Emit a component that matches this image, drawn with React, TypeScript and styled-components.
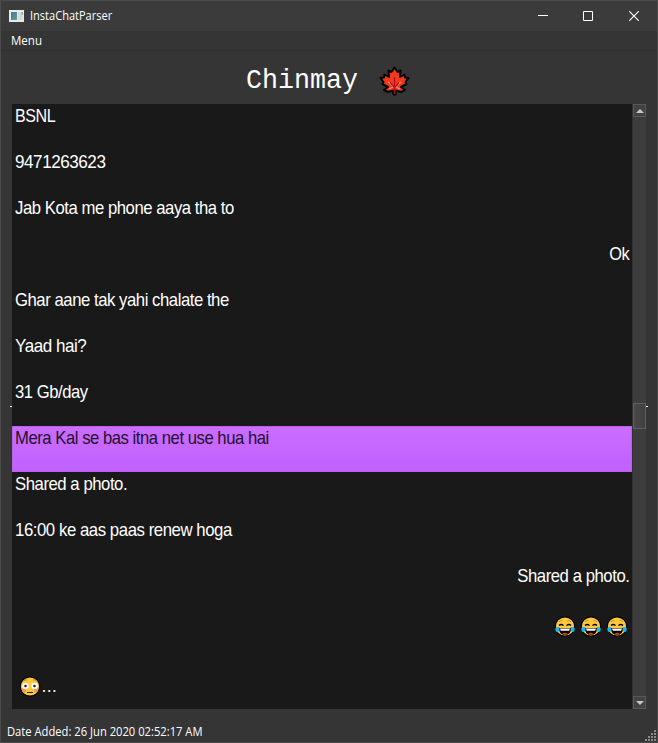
import React from "react";
import styled, { createGlobalStyle } from "styled-components";

const GlobalStyle = createGlobalStyle`
  html, body { margin: 0; padding: 0; background: #353535; }
  body { overflow: hidden; }
  * { box-sizing: border-box; }
`;

const Window = styled.div`
  position: relative;
  width: 658px;
  height: 743px;
  display: flex;
  flex-direction: column;
  background: #353535;
  border: 1px solid #4b4b4b;
  color: #fff;
  font-family: "Open Sans", "Noto Sans", sans-serif;
  font-size: 12px;
  overflow: hidden;
`;

const TitleBar = styled.header`
  display: flex;
  align-items: center;
  height: 30px;
  padding-left: 8px;
  background: #3b3b3b;
`;

const Fitted = styled.span<{ $scale: number; $right?: boolean }>`
  display: inline-block;
  white-space: pre;
  transform: scaleX(${(p) => p.$scale});
  transform-origin: ${(p) => (p.$right ? "right" : "left")} center;
`;

const MessageText = styled(Fitted)`
  letter-spacing: -0.52px;
`;

const WindowTitle = styled.div`
  flex: 1;
  margin-left: 6px;
  line-height: 16px;
`;

const WindowButton = styled.button`
  width: 46px;
  height: 30px;
  padding: 0;
  border: 0;
  background: none;
  display: grid;
  place-items: center;

  &:first-of-type {
    padding-left: 2px;
  }
`;

const MenuBar = styled.nav`
  height: 20px;
  padding-left: 10px;
  line-height: 19px;
  border-bottom: 1px solid #2e2e2e;
`;

const Heading = styled.h1`
  margin: 0;
  height: 53px;
  padding: 6px 0 0 245px;
  display: flex;
  align-items: center;
  gap: 21px;
  font: 400 26.67px/32px "Liberation Mono", monospace;
`;

const HeadingName = styled.span`
  transform: scaleY(1.05);
`;

const Body = styled.main`
  display: flex;
  height: 605px;
  margin: 0 11px;
`;

const List = styled.div`
  flex: 1;
  background: #191919;
  font: 19px/23px "Liberation Sans", sans-serif;
`;

const Row = styled.div<{ $mine?: boolean; $selected?: boolean; $tall?: boolean }>`
  display: flex;
  height: ${(p) => (p.$tall ? 60 : 46)}px;
  padding: ${(p) => (p.$tall ? "6px" : "0")} 3px 0;
  justify-content: ${(p) => (p.$mine ? "flex-end" : "flex-start")};
  ${(p) =>
    p.$selected &&
    `background: linear-gradient(#cb6dff, #c060ff);
     box-shadow: inset 0 0 0 1px #b961ed;
     color: #24112e;`}
`;

const EmojiGroup = styled.div`
  display: flex;
  gap: 4px;
  padding-right: 1px;
  height: 22px;
`;

const FaceGroup = styled.div`
  display: flex;
  padding-left: 4px;
  height: 22px;
`;

const Dots = styled.span`
  line-height: 19px;
`;

const ScrollTrack = styled.div`
  width: 14px;
  display: flex;
  flex-direction: column;
  background: #3d3d3d;
  border-left: 1px solid #303030;
`;

const ScrollButton = styled.button`
  height: 13px;
  width: 13px;
  padding: 0;
  border: 1px solid #5a5a5a;
  background: #424242;
  display: grid;
  place-items: center;
`;

const TrackSpace = styled.div<{ $height: number }>`
  height: ${(p) => p.$height}px;
`;

const Thumb = styled.div`
  height: 26px;
  border: 1px solid #606060;
  background: linear-gradient(90deg, #484848, #404040);
`;

const StatusBar = styled.footer`
  flex: 1;
  display: flex;
  padding: 15px 0 0 6px;
  line-height: 16px;
`;

const Tick = styled.i<{ $left: number }>`
  position: absolute;
  top: 405px;
  left: ${(p) => p.$left}px;
  width: 2px;
  height: 1px;
  background: #fff;
`;

const Grip = styled.svg`
  position: absolute;
  right: 1px;
  bottom: 1px;
`;

const AppIcon = () => (
  <svg width="15" height="12" viewBox="0 0 15 12">
    <defs>
      <linearGradient id="pane" x1="0" y1="0" x2="1" y2="1">
        <stop offset="0" stopColor="#4675a8" />
        <stop offset="1" stopColor="#57a878" />
      </linearGradient>
    </defs>
    <path fill="#e8eaec" d="M0 0h15v12H0z" />
    <path fill="url(#pane)" d="M2 2h6v8H2z" />
    <path fill="#d5d8da" d="M9 2h3v8H9z" />
    <path fill="#7fa49c" d="M12.500 2H14v3h-1.500z" />
    <path fill="#d7dcd9" d="M12 5h2v5h-2z" />
  </svg>
);

const MapleLeaf = () => (
  <svg width="31" height="30" viewBox="0 0 31 30">
    <path
      fill="#f4391a"
      stroke="#000"
      strokeWidth="2"
      strokeLinejoin="round"
      d="M15.500 1.500 18.500 6 21.500 4.500 21 11 25.500 8.500 26 11.500 29.500 12 26.500 16 27.500 18 22 21 26 24 22 26 17 24.500 16.500 28.500H14.500L14 24.500 9 26 5 24 9 21 3.500 18 4.500 16 1.500 12 5 11.500 5.500 8.500 10 11 9.500 4.500 12.500 6z"
    />
    <path fill="none" stroke="#ff9163" strokeWidth="1.200" d="M9 16l5 4M22 16l-5 4M10 23l4-2M21 23l-4-2" />
    <path fill="none" stroke="#b50f28" strokeWidth="1.300" d="M15.500 11v17M11 16.500l4.500 5 4.500-5" />
  </svg>
);

const Joy = () => (
  <svg width="22" height="22" viewBox="0 0 22 22">
    <circle cx="11" cy="10.500" r="9.700" fill="#ffc83d" stroke="#000" strokeWidth="1.200" />
    <path fill="none" stroke="#d38b12" strokeWidth="1" d="M5 6Q6 4.300 8.500 4.500M17 6Q16 4.300 13.500 4.500" />
    <path fill="none" stroke="#000" strokeWidth="1.300" d="M5 9.500Q7 7.500 9.500 9.500M12.500 9.500Q15 7.500 17 9.500" />
    <path fill="#000" d="M5 12h12q0 7-6 7t-6-7z" />
    <path fill="#fff" d="M6 12.500h10l-.8 2.200H6.800z" />
    <path fill="#f03a17" d="M8.500 18q2.500-2.500 5 0-2.500 1.600-5 0z" />
    <path fill="#18b5ee" d="M1.300 12q1.500-1.300 4-.7.200 4.500-2 4.900-2.200-.2-2-4.200zM20.700 12q-1.500-1.300-4-.7-.200 4.500 2 4.900 2.200-.2 2-4.200z" />
  </svg>
);

const Flushed = () => (
  <svg width="22" height="22" viewBox="0 0 22 22">
    <circle cx="11" cy="10.500" r="9.700" fill="#ffc83d" stroke="#000" strokeWidth="1.200" />
    <path fill="none" stroke="#d38b12" strokeWidth="1" d="M4.500 5Q6 3.300 8.500 4M17.500 5Q16 3.300 13.500 4" />
    <circle cx="5" cy="14" r="2.200" fill="#ff9152" />
    <circle cx="17" cy="14" r="2.200" fill="#ff9152" />
    <circle cx="6.500" cy="10" r="3.200" fill="#fff" />
    <circle cx="15.500" cy="10" r="3.200" fill="#fff" />
    <circle cx="6.500" cy="10" r="1.300" fill="#222" />
    <circle cx="15.500" cy="10" r="1.300" fill="#222" />
    <path stroke="#222" strokeWidth="1" d="M8 16.500h6" />
  </svg>
);

type Message = { text: string; scale: number; mine?: boolean; selected?: boolean };

const messages: Message[] = [
  { text: "BSNL", scale: 0.845 },
  { text: "9471263623", scale: 0.9 },
  { text: "Jab Kota me phone aaya tha to", scale: 0.879 },
  { text: "Ok", scale: 0.86, mine: true },
  { text: "Ghar aane tak yahi chalate the", scale: 0.879 },
  { text: "Yaad hai?", scale: 0.896 },
  { text: "31 Gb/day", scale: 0.876 },
  { text: "Mera Kal se bas itna net use hua hai", scale: 0.876, selected: true },
  { text: "Shared a photo.", scale: 0.88 },
  { text: "16:00 ke aas paas renew hoga", scale: 0.884 },
  { text: "Shared a photo.", scale: 0.88, mine: true },
];

const gripDots = [[9, 0], [6, 3], [9, 3], [3, 6], [6, 6], [9, 6], [0, 9], [3, 9], [6, 9], [9, 9]];

export default function App() {
  return (
    <>
      <GlobalStyle />
      <Window>
        <TitleBar>
          <AppIcon />
          <WindowTitle>
            <Fitted $scale={0.92}>InstaChatParser</Fitted>
          </WindowTitle>
          <WindowButton aria-label="Minimize">
            <svg width="10" height="10"><path d="M0 4.500h10" stroke="#fff" /></svg>
          </WindowButton>
          <WindowButton aria-label="Maximize">
            <svg width="10" height="10"><path d="M.5.5h9v9h-9z" fill="none" stroke="#fff" /></svg>
          </WindowButton>
          <WindowButton aria-label="Close">
            <svg width="10" height="10"><path d="M.3.3l9.400 9.400M9.700.3L.3 9.700" stroke="#fff" strokeWidth="1.200" /></svg>
          </WindowButton>
        </TitleBar>
        <MenuBar>
          <Fitted $scale={0.96}>Menu</Fitted>
        </MenuBar>
        <Heading>
          <HeadingName>Chinmay</HeadingName>
          <MapleLeaf />
        </Heading>
        <Body>
          <List>
            {messages.map((m, i) => (
              <Row key={i} $mine={m.mine} $selected={m.selected}>
                <MessageText $scale={m.scale} $right={m.mine}>{m.text}</MessageText>
              </Row>
            ))}
            <Row $mine $tall>
              <EmojiGroup><Joy /><Joy /><Joy /></EmojiGroup>
            </Row>
            <Row $tall>
              <FaceGroup><Flushed /><Dots><Fitted $scale={0.86}>…</Fitted></Dots></FaceGroup>
            </Row>
          </List>
          <ScrollTrack>
            <ScrollButton aria-label="Scroll up">
              <svg width="8" height="4"><path d="M0 4L4 0l4 4z" fill="#c8c8c8" /></svg>
            </ScrollButton>
            <TrackSpace $height={286} />
            <Thumb />
            <TrackSpace $height={267} />
            <ScrollButton aria-label="Scroll down">
              <svg width="8" height="4"><path d="M0 0l4 4 4-4z" fill="#c8c8c8" /></svg>
            </ScrollButton>
          </ScrollTrack>
        </Body>
        <StatusBar>
          <Fitted $scale={0.933}>Date Added: 26 Jun 2020 02:52:17 AM</Fitted>
        </StatusBar>
        <Tick $left={9} />
        <Tick $left={645} />
        <Grip width="11" height="11">
          {gripDots.map(([x, y]) => (
            <rect key={`${x}-${y}`} x={x} y={y} width="2" height="2" fill="#8a8a8a" />
          ))}
        </Grip>
      </Window>
    </>
  );
}
